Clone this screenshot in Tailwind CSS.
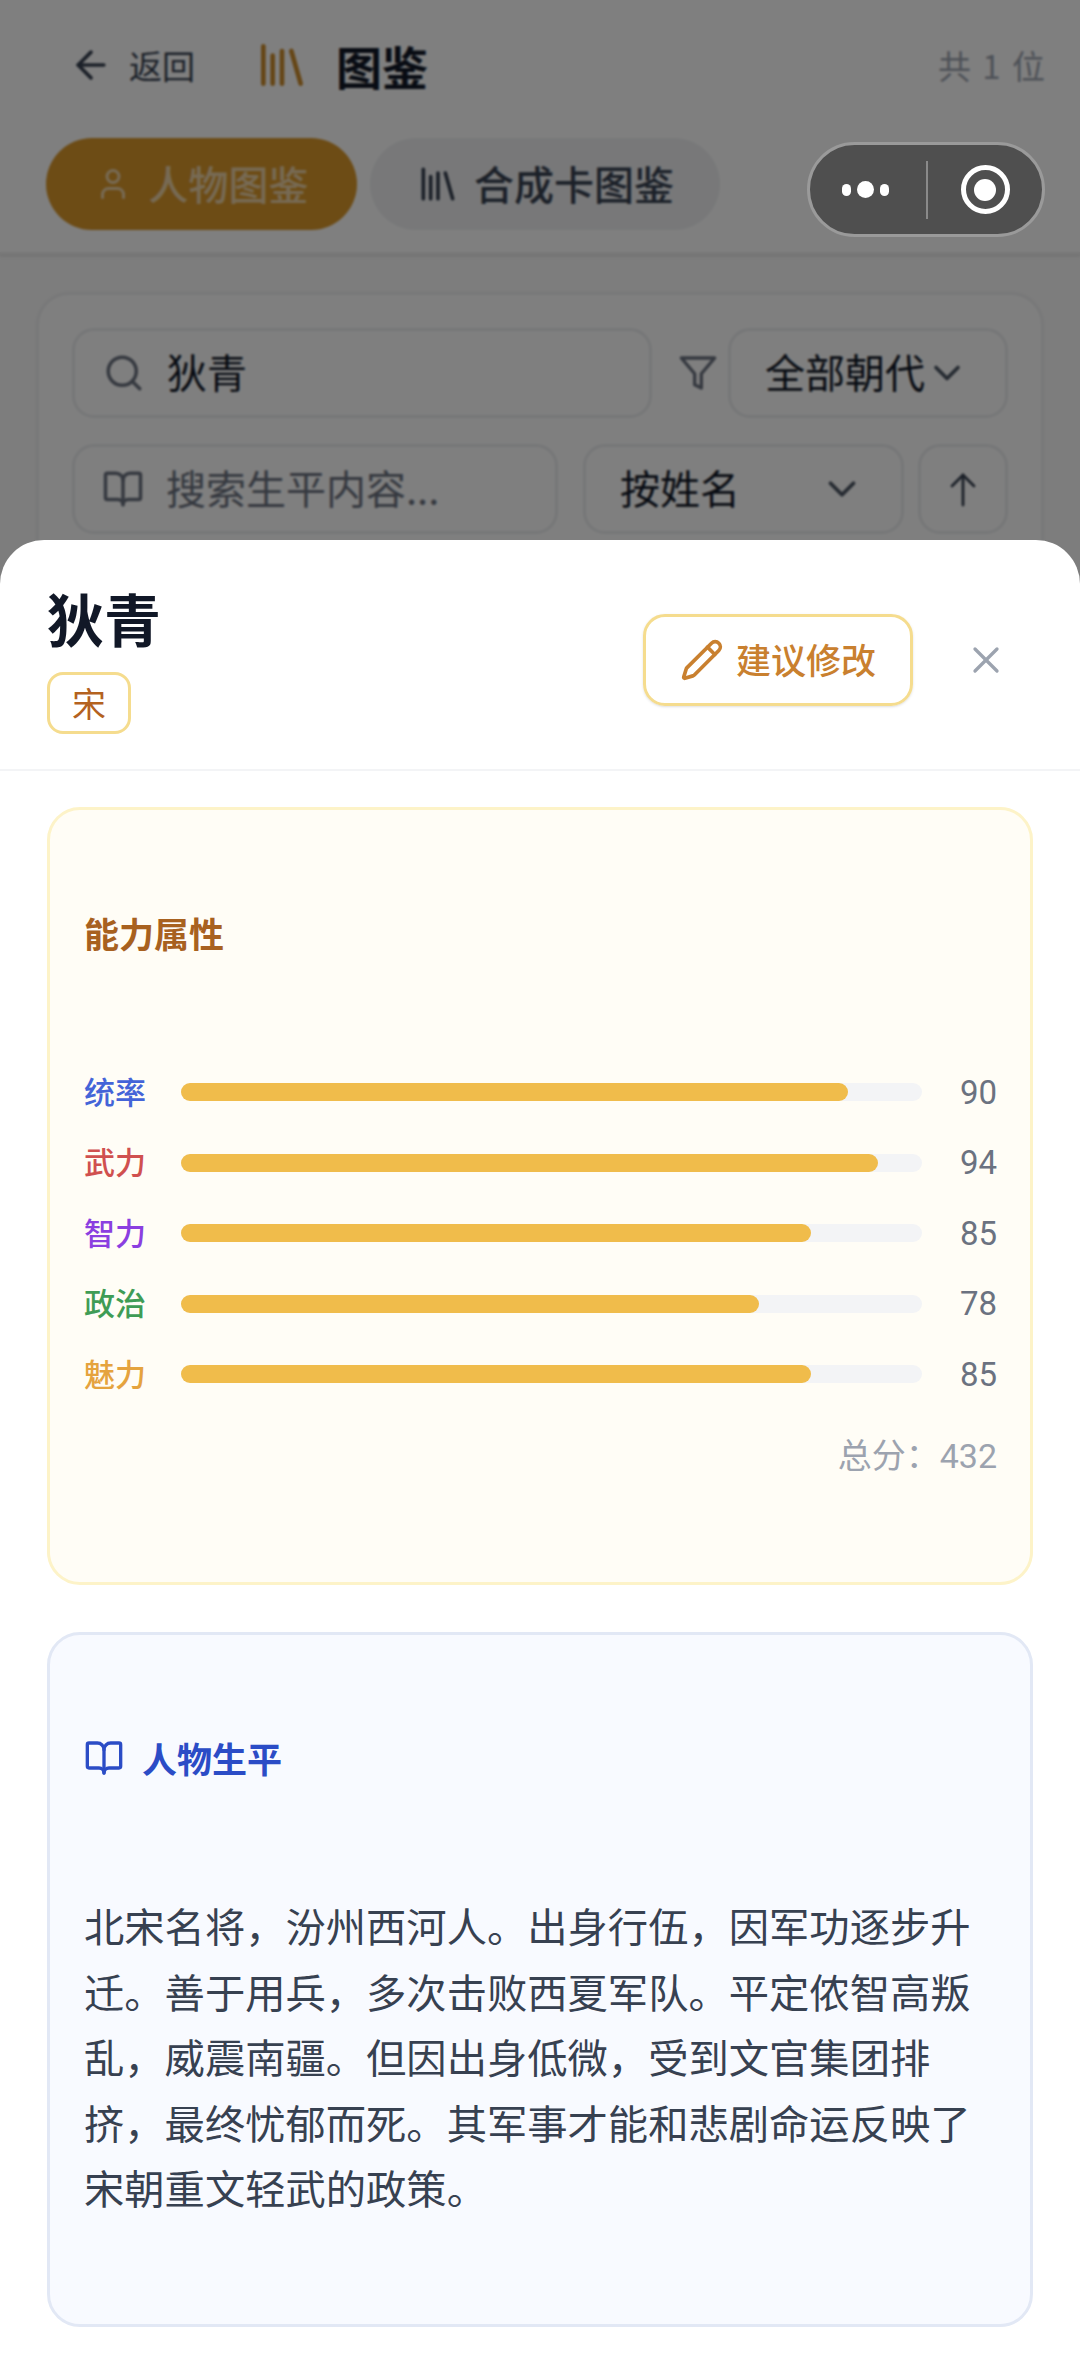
<!DOCTYPE html>
<html lang="zh"><head><meta charset="utf-8">
<script src="https://cdn.jsdelivr.net/npm/@tailwindcss/browser@4"></script>
</head>
<body class="m-0">
<div class="relative w-[1080px] h-[2363px] overflow-hidden bg-[#fafafa] font-['Noto_Sans_CJK_SC','Noto_Sans',sans-serif]">
  <!-- page behind -->
  <header class="h-[255px] bg-white border-b-[3px] border-[#f0f0f0] shadow-sm">
    <div class="flex items-center h-[56px] pt-[37px] box-content pl-[69px] pr-[33px]">
      <svg class="w-[44px] h-[44px] text-[#374151]" viewBox="0 0 24 24" fill="none" stroke="currentColor" stroke-width="2" stroke-linecap="round" stroke-linejoin="round"><path d="m12 19-7-7 7-7"/><path d="M19 12H5"/></svg>
      <span class="ml-[16px] text-[33px] text-[#374151] leading-none">返回</span>
      <svg class="ml-[59px] w-[56px] h-[56px] text-[#cc8c2c]" viewBox="0 0 24 24" fill="none" stroke="currentColor" stroke-width="2" stroke-linecap="round" stroke-linejoin="round"><path d="m16 6 4 14"/><path d="M12 6v14"/><path d="M8 8v12"/><path d="M4 4v16"/></svg>
      <span class="ml-[26px] text-[46px] font-bold text-[#111827] leading-none">图鉴</span>
      <span class="ml-auto text-[33px] text-[#9ca3af] leading-none tracking-[2px]">共 1 位</span>
    </div>
    <div class="flex mt-[45px] pl-[46px] gap-[13px]">
      <div class="flex items-center justify-center w-[311px] h-[92px] rounded-full bg-[#da982b] text-white/60 gap-[18px]">
        <svg class="w-[36px] h-[36px]" viewBox="0 0 24 24" fill="none" stroke="currentColor" stroke-width="2" stroke-linecap="round" stroke-linejoin="round"><path d="M19 21v-2a4 4 0 0 0-4-4H9a4 4 0 0 0-4 4v2"/><circle cx="12" cy="7" r="4"/></svg>
        <span class="text-[40px] leading-none font-medium pb-[3px]">人物图鉴</span>
      </div>
      <div class="flex items-center justify-center w-[350px] h-[92px] rounded-full bg-[#f0f1f3] text-[#374151] gap-[14px]">
        <svg class="w-[44px] h-[44px]" viewBox="0 0 24 24" fill="none" stroke="currentColor" stroke-width="2" stroke-linecap="round" stroke-linejoin="round"><path d="m16 6 4 14"/><path d="M12 6v14"/><path d="M8 8v12"/><path d="M4 4v16"/></svg>
        <span class="text-[40px] leading-none font-medium pb-[3px]">合成卡图鉴</span>
      </div>
    </div>
  </header>
  <section class="mt-[37px] mx-[36px] h-[300px] rounded-[33px] border-[3px] border-[#f0f1f2] bg-white px-[33px] pt-[33px] text-[40px] leading-none">
    <div class="flex items-center h-[90px]">
      <div class="flex items-center w-[580px] h-full rounded-[22px] border-[3px] border-[#eceef0] pl-[28px] gap-[22px]">
        <svg class="w-[42px] h-[42px] text-[#6b7280]" viewBox="0 0 24 24" fill="none" stroke="currentColor" stroke-width="2" stroke-linecap="round" stroke-linejoin="round"><path d="m21 21-4.34-4.34"/><circle cx="11" cy="11" r="8"/></svg>
        <span class="text-[#111827] pb-[4px]">狄青</span>
      </div>
      <svg class="ml-[26px] w-[40px] h-[40px] text-[#6b7280]" viewBox="0 0 24 24" fill="none" stroke="currentColor" stroke-width="2" stroke-linecap="round" stroke-linejoin="round"><polygon points="22 3 2 3 10 12.46 10 19 14 21 14 12.46 22 3"/></svg>
      <div class="ml-[10px] flex items-center w-[280px] h-full rounded-[22px] border-[3px] border-[#eceef0] pl-[34px] gap-[0px] text-[#111827]">
        <span class="pb-[4px]">全部朝代</span>
        <svg class="w-[44px] h-[44px] text-[#4b5563]" viewBox="0 0 24 24" fill="none" stroke="currentColor" stroke-width="2" stroke-linecap="round" stroke-linejoin="round"><path d="m6 9 6 6 6-6"/></svg>
      </div>
    </div>
    <div class="flex items-center h-[90px] mt-[26px]">
      <div class="flex items-center w-[486px] h-full rounded-[22px] border-[3px] border-[#eceef0] pl-[27px] gap-[22px] text-[#6b7280]">
        <svg class="w-[42px] h-[42px]" viewBox="0 0 24 24" fill="none" stroke="currentColor" stroke-width="2" stroke-linecap="round" stroke-linejoin="round"><path d="M12 7v14"/><path d="M3 18a1 1 0 0 1-1-1V4a1 1 0 0 1 1-1h5a4 4 0 0 1 4 4 4 4 0 0 1 4-4h5a1 1 0 0 1 1 1v13a1 1 0 0 1-1 1h-6a3 3 0 0 0-3 3 3 3 0 0 0-3-3z"/></svg>
        <span class="pb-[4px]">搜索生平内容...</span>
      </div>
      <div class="ml-[25px] flex items-center justify-between w-[321px] h-full rounded-[22px] border-[3px] border-[#eceef0] pl-[34px] pr-[36px] text-[#111827]">
        <span class="pb-[4px]">按姓名</span>
        <svg class="w-[46px] h-[46px] text-[#4b5563]" viewBox="0 0 24 24" fill="none" stroke="currentColor" stroke-width="2" stroke-linecap="round" stroke-linejoin="round"><path d="m6 9 6 6 6-6"/></svg>
      </div>
      <div class="ml-[14px] flex items-center justify-center w-[90px] h-full rounded-[22px] border-[3px] border-[#eceef0] text-[#374151]">
        <svg class="w-[48px] h-[48px]" viewBox="0 0 24 24" fill="none" stroke="currentColor" stroke-width="1.4" stroke-linecap="round" stroke-linejoin="round"><path d="m6.500 10.500 5.500-5.500 5.500 5.500"/><path d="M12 20V5"/></svg>
      </div>
    </div>
  </section>

  <!-- dim overlay -->
  <div class="absolute inset-0 bg-black/50 backdrop-blur-[1px]"></div>

  <!-- capsule -->
  <div class="absolute left-[807px] top-[142px] w-[238px] h-[95px] rounded-full bg-[#4f4f4f] border-[3px] border-[#9a9a9a] flex items-center">
    <div class="w-[116px] pr-[6px] flex items-center justify-center gap-[6px]">
      <span class="w-[9px] h-[12px] rounded-full bg-white"></span>
      <span class="w-[17px] h-[17px] rounded-full bg-white"></span>
      <span class="w-[9px] h-[12px] rounded-full bg-white"></span>
    </div>
    <div class="w-[2px] h-[58px] bg-[#8a8a8a]"></div>
    <div class="flex-1 flex items-center justify-center">
      <div class="w-[49px] h-[49px] rounded-full border-[5px] border-white flex items-center justify-center">
        <span class="w-[22px] h-[22px] rounded-full bg-white"></span>
      </div>
    </div>
  </div>

  <!-- bottom sheet -->
  <div class="absolute left-0 right-0 top-[540px] bottom-0 rounded-t-[44px] bg-white">
    <div class="h-[231px] border-b-[2px] border-[#f3f4f6] flex items-start pl-[47px] pr-[72px]">
      <div class="pt-[41px]">
        <h2 class="text-[57px] leading-[72px] font-bold text-[#111827]">狄青</h2>
        <span class="mt-[19px] flex items-center justify-center w-[84px] h-[62px] rounded-[16px] border-[3px] border-[#f5dc8e] text-[34px] leading-none text-[#b4621f]">宋</span>
      </div>
      <div class="ml-auto mt-[74px] flex items-center justify-center gap-[12px] w-[270px] h-[92px] rounded-[22px] border-[3px] border-[#f5dc8e] text-[#c9802f] shadow-sm">
        <svg class="w-[44px] h-[44px]" viewBox="0 0 24 24" fill="none" stroke="currentColor" stroke-width="2" stroke-linecap="round" stroke-linejoin="round"><path d="M21.174 6.812a1 1 0 0 0-3.986-3.987L3.842 16.174a2 2 0 0 0-.5.83l-1.321 4.352a.5.5 0 0 0 .623.622l4.353-1.32a2 2 0 0 0 .83-.497z"/><path d="m15 5 4 4"/></svg>
        <span class="text-[35px] leading-none font-medium pb-[3px]">建议修改</span>
      </div>
      <svg class="ml-[51px] mt-[98px] w-[44px] h-[44px] text-[#9ca3af]" viewBox="0 0 24 24" fill="none" stroke="currentColor" stroke-width="1.8" stroke-linecap="round" stroke-linejoin="round"><path d="M18 6 6 18"/><path d="m6 6 12 12"/></svg>
    </div>

    <div class="px-[47px] pt-[36px]">
      <section class="h-[778px] rounded-[33px] border-[3px] border-[#fdf3c8] bg-[#fffdf6] pl-[34px] pr-[33px] pt-[101px]">
        <h3 class="text-[35px] leading-[44px] font-bold text-[#a8611f]">能力属性</h3>
        <div class="mt-[102px] text-[31px] leading-none">
          <div class="flex items-center h-[70.5px]">
            <span class="w-[97px] text-[#4464d8] font-medium pb-[4px]">统率</span>
            <div class="w-[741px] h-[18px] rounded-full bg-[#f3f4f6]"><div class="h-full rounded-full bg-[#f0bc4b]" style="width:90%"></div></div>
            <span class="flex-1 text-right text-[#6b7280] font-['Roboto'] text-[33px]">90</span>
          </div>
          <div class="flex items-center h-[70.5px]">
            <span class="w-[97px] text-[#d0504f] font-medium pb-[4px]">武力</span>
            <div class="w-[741px] h-[18px] rounded-full bg-[#f3f4f6]"><div class="h-full rounded-full bg-[#f0bc4b]" style="width:94%"></div></div>
            <span class="flex-1 text-right text-[#6b7280] font-['Roboto'] text-[33px]">94</span>
          </div>
          <div class="flex items-center h-[70.5px]">
            <span class="w-[97px] text-[#8b3fe0] font-medium pb-[4px]">智力</span>
            <div class="w-[741px] h-[18px] rounded-full bg-[#f3f4f6]"><div class="h-full rounded-full bg-[#f0bc4b]" style="width:85%"></div></div>
            <span class="flex-1 text-right text-[#6b7280] font-['Roboto'] text-[33px]">85</span>
          </div>
          <div class="flex items-center h-[70.5px]">
            <span class="w-[97px] text-[#3f9c55] font-medium pb-[4px]">政治</span>
            <div class="w-[741px] h-[18px] rounded-full bg-[#f3f4f6]"><div class="h-full rounded-full bg-[#f0bc4b]" style="width:78%"></div></div>
            <span class="flex-1 text-right text-[#6b7280] font-['Roboto'] text-[33px]">78</span>
          </div>
          <div class="flex items-center h-[70.5px]">
            <span class="w-[97px] text-[#e5a33e] font-medium pb-[4px]">魅力</span>
            <div class="w-[741px] h-[18px] rounded-full bg-[#f3f4f6]"><div class="h-full rounded-full bg-[#f0bc4b]" style="width:85%"></div></div>
            <span class="flex-1 text-right text-[#6b7280] font-['Roboto'] text-[33px]">85</span>
          </div>
          <div class="mt-[27px] text-right text-[34px] text-[#9ca3af]">总分：<span class="font-['Roboto']">432</span></div>
        </div>
      </section>

      <section class="mt-[47px] h-[695px] rounded-[33px] border-[3px] border-[#e2e8f5] bg-[#f8faff] px-[34px] pt-[101px]">
        <div class="flex items-center gap-[18px] text-[#2b4cc6]">
          <svg class="w-[40px] h-[40px]" viewBox="0 0 24 24" fill="none" stroke="currentColor" stroke-width="2" stroke-linecap="round" stroke-linejoin="round"><path d="M12 7v14"/><path d="M3 18a1 1 0 0 1-1-1V4a1 1 0 0 1 1-1h5a4 4 0 0 1 4 4 4 4 0 0 1 4-4h5a1 1 0 0 1 1 1v13a1 1 0 0 1-1 1h-6a3 3 0 0 0-3 3 3 3 0 0 0-3-3z"/></svg>
          <h3 class="text-[35px] leading-[44px] font-bold">人物生平</h3>
        </div>
        <p class="mt-[112px] text-[40.3px] leading-[65.5px] text-[#374151]">北宋名将，汾州西河人。出身行伍，因军功逐步升迁。善于用兵，多次击败西夏军队。平定侬智高叛乱，威震南疆。但因出身低微，受到文官集团排挤，最终忧郁而死。其军事才能和悲剧命运反映了宋朝重文轻武的政策。</p>
      </section>
    </div>
  </div>
</div>
</body></html>
